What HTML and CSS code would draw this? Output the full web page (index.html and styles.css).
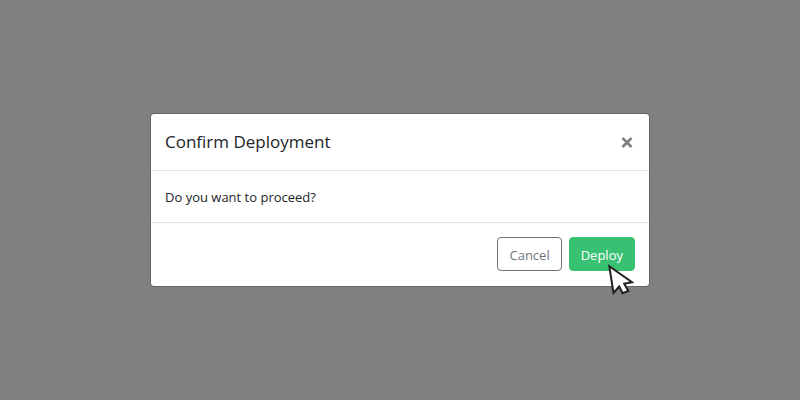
FILE: index.html
```
<!DOCTYPE html>
<html lang="en">
<head>
    <meta charset="UTF-8">
    <title>Confirm Deployment</title>
    <meta name="viewport" content="width=device-width, initial-scale=1.0">
    <link rel="stylesheet" href="styles.css">
</head>
<body>
    <div class="modal" role="dialog" aria-modal="true" aria-labelledby="modalTitle">
        <div class="modal-header">
            <h1 class="modal-title" id="modalTitle">Confirm Deployment</h1>
            <button type="button" class="close" aria-label="Close">
                <svg width="12" height="12" viewBox="0 0 12 12" aria-hidden="true">
                    <path d="M1.5 2 L10.5 11 M10.5 2 L1.5 11" fill="none" stroke="currentColor" stroke-width="2.6"/>
                </svg>
            </button>
        </div>
        <div class="modal-body">
            <p>Do you want to proceed?</p>
        </div>
        <div class="modal-footer">
            <button type="button" class="btn btn-cancel">Cancel</button>
            <button type="button" class="btn btn-deploy">
                Deploy
                <svg class="pointer" width="28" height="32" viewBox="0 0 28 32" aria-hidden="true">
                    <path d="M2.3 2.3 L25 18.2 L17.2 19.7 L21.3 27 L15.6 29.3 L12.2 22.5 L6.5 29 Z" fill="#fff" stroke="#231f20" stroke-width="2"/>
                </svg>
            </button>
        </div>
    </div>
</body>
</html>
```

FILE: styles.css
```
* {
    box-sizing: border-box;
}
body {
    font-family: "Segoe UI", "Open Sans", "Noto Sans", sans-serif;
    font-size: 13px;
    line-height: 20px;
    color: #212529;
    background: #808080;
    margin: 0;
    min-height: 100vh;
    display: flex;
    align-items: center;
    justify-content: center;
}
.modal {
    width: 100%;
    max-width: 500px;
    background: #fff;
    background-clip: padding-box;
    border: 1px solid rgba(0,0,0,0.2);
    border-radius: 4px;
}
.modal-header {
    display: flex;
    justify-content: space-between;
    align-items: center;
    padding: 14px;
    border-bottom: 1px solid #dee2e6;
}
.modal-title {
    margin: 0;
    font-size: 17px;
    line-height: 28px;
    font-weight: normal;
}
.close {
    display: flex;
    padding: 2px;
    border: none;
    background: none;
    color: #7f7f7f;
    cursor: pointer;
}
.modal-body {
    padding: 16px 14px 15px;
}
.modal-body p {
    margin: 0;
}
.modal-footer {
    display: flex;
    justify-content: flex-end;
    gap: 7px;
    padding: 14px 14px 15px;
    border-top: 1px solid #dee2e6;
}
.btn {
    font: inherit;
    padding: 7px 11px 5px;
    border: 1px solid;
    border-radius: 4px;
    cursor: pointer;
}
.btn-cancel {
    color: #6c757d;
    background: #fff;
    border-color: #6c757d;
}
.btn-deploy {
    position: relative;
    color: #fff;
    background: #38c172;
    border-color: #38c172;
}
.pointer {
    position: absolute;
    top: 26px;
    left: 37px;
    pointer-events: none;
}
```
